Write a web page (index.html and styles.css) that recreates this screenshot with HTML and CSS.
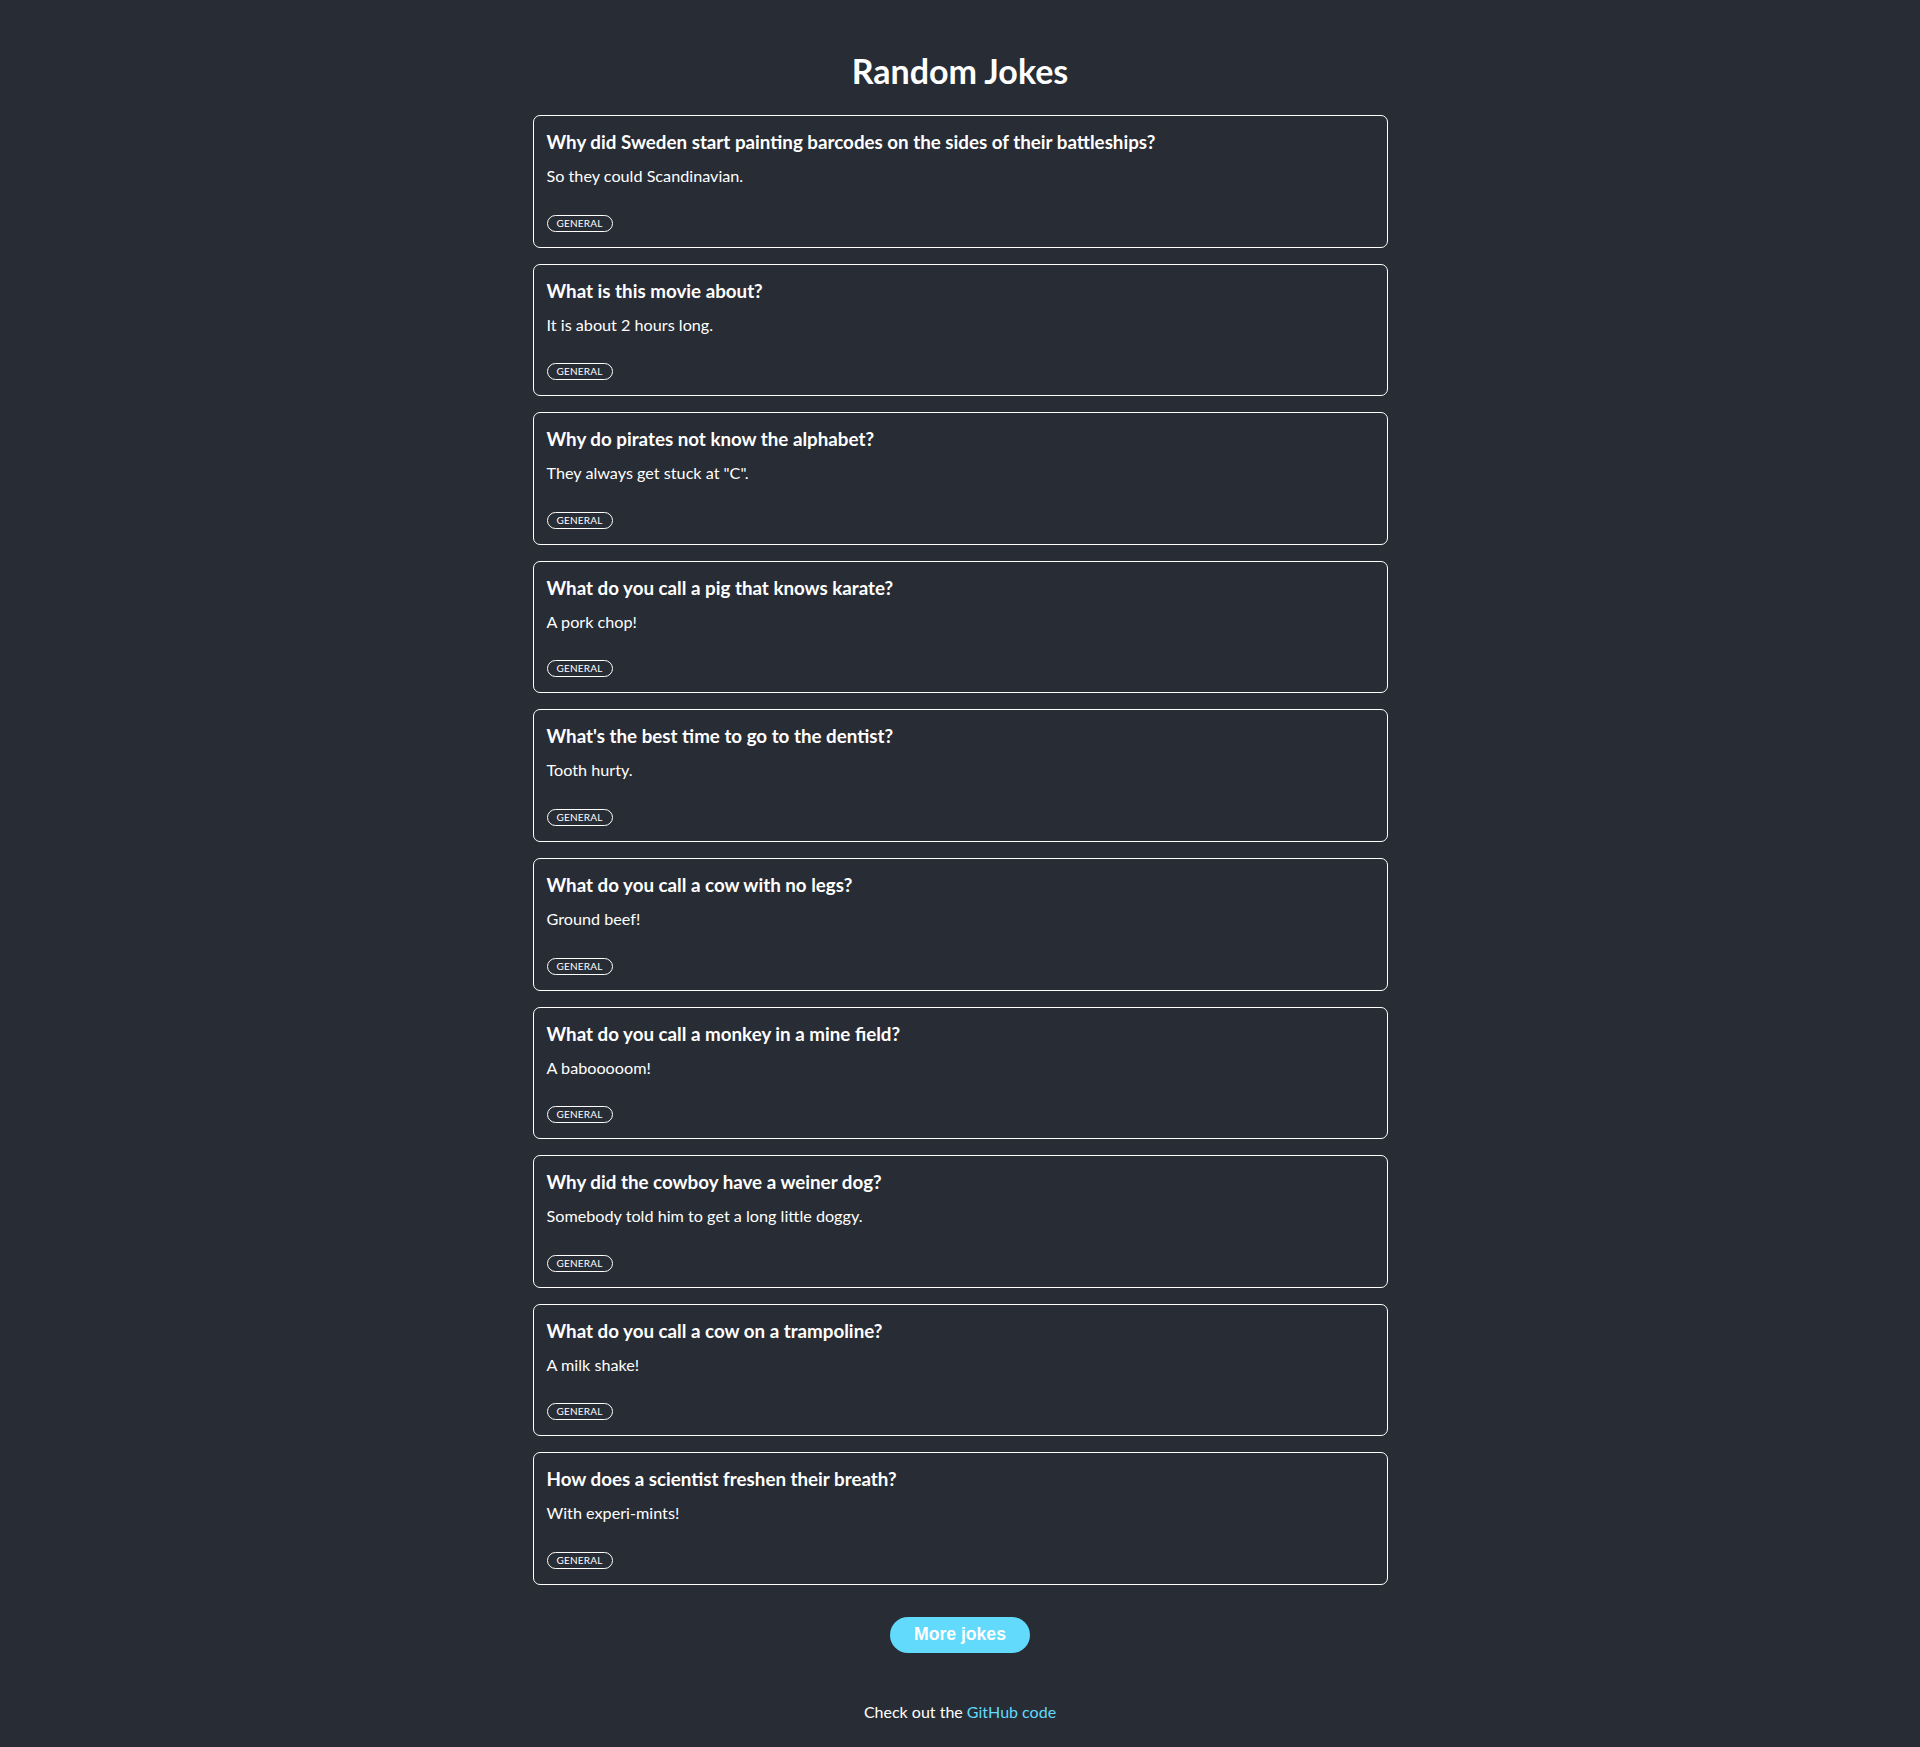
FILE: index.html
```html
<!DOCTYPE html>
<html lang="en">
<head>
<meta charset="utf-8">
<title>Random Jokes</title>
<link rel="stylesheet" href="styles.css">
</head>
<body>
<main class="app">
  <h1 class="title">Random Jokes</h1>
  <ul class="jokes">
    <li class="joke">
      <h3 class="setup">Why did Sweden start painting barcodes on the sides of their battleships?</h3>
      <p class="punchline">So they could Scandinavian.</p>
      <span class="tag">general</span>
    </li>
    <li class="joke">
      <h3 class="setup">What is this movie about?</h3>
      <p class="punchline">It is about 2 hours long.</p>
      <span class="tag">general</span>
    </li>
    <li class="joke">
      <h3 class="setup">Why do pirates not know the alphabet?</h3>
      <p class="punchline">They always get stuck at "C".</p>
      <span class="tag">general</span>
    </li>
    <li class="joke">
      <h3 class="setup">What do you call a pig that knows karate?</h3>
      <p class="punchline">A pork chop!</p>
      <span class="tag">general</span>
    </li>
    <li class="joke">
      <h3 class="setup">What's the best time to go to the dentist?</h3>
      <p class="punchline">Tooth hurty.</p>
      <span class="tag">general</span>
    </li>
    <li class="joke">
      <h3 class="setup">What do you call a cow with no legs?</h3>
      <p class="punchline">Ground beef!</p>
      <span class="tag">general</span>
    </li>
    <li class="joke">
      <h3 class="setup">What do you call a monkey in a mine field?</h3>
      <p class="punchline">A babooooom!</p>
      <span class="tag">general</span>
    </li>
    <li class="joke">
      <h3 class="setup">Why did the cowboy have a weiner dog?</h3>
      <p class="punchline">Somebody told him to get a long little doggy.</p>
      <span class="tag">general</span>
    </li>
    <li class="joke">
      <h3 class="setup">What do you call a cow on a trampoline?</h3>
      <p class="punchline">A milk shake!</p>
      <span class="tag">general</span>
    </li>
    <li class="joke">
      <h3 class="setup">How does a scientist freshen their breath?</h3>
      <p class="punchline">With experi-mints!</p>
      <span class="tag">general</span>
    </li>
  </ul>
  <button class="more" type="button">More jokes</button>
  <footer class="footer">Check out the <a class="link" href="#">GitHub code</a></footer>
</main>
</body>
</html>
```

FILE: styles.css
```css
* {
  box-sizing: border-box;
}

html, body {
  margin: 0;
  padding: 0;
  background: #282c34;
}

body {
  color: #ffffff;
  font-family: "Lato", "Open Sans", sans-serif;
}

.app {
  display: flex;
  flex-direction: column;
  align-items: center;
  padding: 50px 0 40px;
}

.title {
  margin: 0 0 24px;
  font-size: 34px;
  line-height: 41px;
  font-weight: 700;
}

.jokes {
  list-style: none;
  margin: 0;
  padding: 0;
  width: 855px;
  display: flex;
  flex-direction: column;
  gap: 16px;
}

.joke {
  border: 1px solid #ffffff;
  border-radius: 7px;
  padding: 14px 13px 15px;
  display: flex;
  flex-direction: column;
  align-items: flex-start;
  height: 132.6px;
}

.setup {
  margin: 0;
  font-size: 18.75px;
  line-height: 24px;
  font-weight: 700;
}

.punchline {
  margin: 11px 0 0;
  font-size: 16.2px;
  line-height: 22px;
}

.tag {
  margin-top: auto;
  border: 1px solid #ffffff;
  border-radius: 9px;
  height: 17px;
  padding: 0 9px;
  font-size: 10px;
  line-height: 15px;
  text-transform: uppercase;
  letter-spacing: 0.2px;
}

.more {
  margin-top: 32px;
  background: #61dafb;
  color: #ffffff;
  border: none;
  border-radius: 18px;
  height: 36px;
  padding: 0 24px;
  font-family: "Liberation Sans", Arial, sans-serif;
  font-weight: 700;
  font-size: 17.6px;
  cursor: pointer;
}

.footer {
  margin-top: 48px;
  font-size: 16px;
  line-height: 22px;
}

.link {
  color: #61dafb;
  text-decoration: none;
}
```
